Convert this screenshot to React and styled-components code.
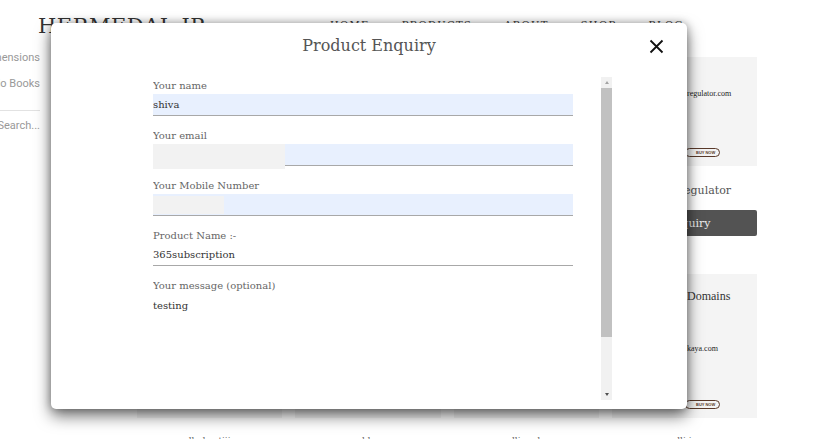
import React from 'react';
import styled, { createGlobalStyle } from 'styled-components';

const GlobalStyle = createGlobalStyle`
  html, body {
    margin: 0;
    padding: 0;
    background: #fff;
    font-family: "DejaVu Serif", "Liberation Serif", serif;
    overflow: hidden;
  }
  * { box-sizing: border-box; }
`;

const Page = styled.div`
  position: relative;
  width: 840px;
  height: 439px;
  overflow: hidden;
`;

const Header = styled.header`
  display: flex;
  align-items: flex-start;
  height: 50px;
  padding: 14px 0 0 38px;
`;

const Logo = styled.div`
  font-size: 21px;
  color: #333;
  letter-spacing: 0.5px;
  width: 292px;
`;

const Nav = styled.nav`
  display: flex;
  gap: 32px;
  padding-top: 5px;
`;

const NavItem = styled.span`
  font-size: 10px;
  letter-spacing: 1.3px;
  color: #333;
`;

const Body = styled.div`
  display: flex;
  padding-top: 7px;
`;

const Sidebar = styled.aside`
  width: 40px;
  margin-top: -6px;
  overflow: hidden;
  display: flex;
  flex-direction: column;
  align-items: flex-end;
  font-family: Roboto, "Noto Sans", sans-serif;
  font-size: 11px;
  color: #999;
`;

const SideItem = styled.div`
  white-space: nowrap;
  height: ${p => p.$h}px;
  padding-top: ${p => p.$pt || 0}px;
  line-height: 14px;
  width: 100%;
  display: flex;
  justify-content: flex-end;
  border-bottom: ${p => (p.$line ? '1px solid #e2e2e2' : 'none')};
`;

const Products = styled.div`
  margin-left: 97px;
  width: 620px;
  display: grid;
  grid-template-columns: repeat(4, 1fr);
  column-gap: 13px;
`;

const Card = styled.div`
  display: flex;
  flex-direction: column;
  align-items: stretch;
  margin-top: ${p => p.$mt || 0}px;
`;

const Thumb = styled.div`
  height: ${p => p.$h}px;
  background: #f4f4f4;
  display: flex;
  flex-direction: column;
  align-items: flex-end;
  padding-top: ${p => p.$pt || 0}px;
  font-family: "Liberation Serif", serif;
  color: #333;
`;

const ThumbTitle = styled.div`
  font-size: 12px;
  width: 70px;
`;

const ThumbUrl = styled.div`
  font-size: 8px;
  color: #222;
  width: 70px;
  margin-top: ${p => p.$mt}px;
`;

const Pill = styled.div`
  width: 72px;
  margin-top: auto;
  margin-bottom: 8px;
  span {
    display: inline-block;
    font-family: "Liberation Sans", sans-serif;
    font-size: 4px;
    font-weight: bold;
    color: #5a3a2a;
    border: 1.5px solid #5a3a2a;
    border-radius: 6px;
    padding: 1px 4px 1px 10px;
  }
`;

const ProductName = styled.div`
  font-size: 11px;
  color: #555;
  text-align: center;
  padding: 18px 0 13px 38px;
`;

const EnquiryButton = styled.button`
  height: 26px;
  border: none;
  border-radius: 2px;
  background: #535353;
  color: #eee;
  font-family: inherit;
  font-size: 11px;
  padding-left: 14px;
`;

const BottomLabel = styled.div`
  font-size: 9px;
  color: #666;
  text-align: center;
  padding-top: 18px;
`;

const Modal = styled.div`
  position: absolute;
  left: 51px;
  top: 23px;
  width: 636px;
  height: 386px;
  background: #fff;
  border-radius: 5px;
  box-shadow: 0 7px 16px rgba(0, 0, 0, 0.55), 0 0 9px rgba(0, 0, 0, 0.3);
  display: flex;
  flex-direction: column;
`;

const ModalHeader = styled.div`
  position: relative;
  height: 54px;
  display: flex;
  justify-content: center;
  padding-top: 13px;
`;

const ModalTitle = styled.h2`
  margin: 0;
  font-size: 16px;
  font-weight: normal;
  color: #555;
`;

const CloseButton = styled.button`
  position: absolute;
  right: 23px;
  top: 16px;
  width: 15px;
  height: 15px;
  padding: 0;
  border: none;
  background: none;
  cursor: pointer;
  svg { display: block; }
`;

const ModalBody = styled.div`
  display: flex;
  padding-left: 102px;
  gap: 28px;
  height: 323px;
`;

const ScrollArea = styled.div`
  width: 420px;
  height: 100%;
  overflow: hidden;
`;

const Scrollbar = styled.div`
  width: 11px;
  height: 100%;
  background: #f1f1f1;
  display: flex;
  flex-direction: column;
`;

const ScrollArrow = styled.div`
  height: 11px;
  margin-top: ${p => (p.$down ? 'auto' : '0')};
  display: flex;
  align-items: center;
  justify-content: center;
  &::before {
    content: '';
    border-left: 2.5px solid transparent;
    border-right: 2.5px solid transparent;
    ${p => (p.$down
      ? 'border-top: 3px solid #505050;'
      : 'border-bottom: 3px solid #a3a3a3;')}
  }
`;

const ScrollThumb = styled.div`
  height: 249px;
  background: #c1c1c1;
`;

const Form = styled.form`
  width: 420px;
  padding-top: 2px;
`;

const Field = styled.div`
  position: relative;
  margin-bottom: 13px;
`;

const Label = styled.label`
  display: block;
  font-size: 10px;
  line-height: 14px;
  color: #666;
  margin-bottom: 1px;
`;

const Input = styled.input`
  display: block;
  width: 100%;
  height: 22px;
  border: none;
  border-bottom: 1px solid #a8a8a8;
  background: ${p => (p.$filled ? '#e8f0fe' : 'transparent')};
  padding: 0;
  font-family: inherit;
  font-size: 10px;
  color: #333;
  outline: none;
`;

const TextArea = styled.textarea`
  display: block;
  width: 100%;
  height: 140px;
  border: none;
  border-bottom: 1px solid #a8a8a8;
  resize: none;
  padding: 6px 0 0;
  font-family: inherit;
  font-size: 10px;
  color: #333;
  outline: none;
`;

const Mask = styled.div`
  position: absolute;
  left: ${p => p.$x}px;
  top: ${p => p.$y}px;
  width: ${p => p.$w}px;
  height: ${p => p.$h}px;
  background: #f2f2f2;
`;

const SubmitButton = styled.button`
  height: 30px;
  padding: 0 20px;
  border: none;
  background: #535353;
  color: #fff;
  font-family: inherit;
`;

const bottomLabels = ['llades tiji', 'a cld a a', 'lli and', 'lli i'];

export default function App() {
  return (
    <>
      <GlobalStyle />
      <Page>
        <Header>
          <Logo>HERMEDAL IP</Logo>
          <Nav>
            <NavItem>HOME</NavItem>
            <NavItem>PRODUCTS</NavItem>
            <NavItem>ABOUT</NavItem>
            <NavItem>SHOP</NavItem>
            <NavItem>BLOG</NavItem>
          </Nav>
        </Header>

        <Body>
          <Sidebar>
            <SideItem $h={26}>Dimensions</SideItem>
            <SideItem $h={34} $line>Audio Books</SideItem>
            <SideItem $h={30} $pt={8}>Search...</SideItem>
          </Sidebar>

          <Products>
            {[0, 1, 2, 3].map(i => (
              <Card key={i}>
                <Thumb $h={109} $pt={32}>
                  {i === 3 && <ThumbUrl $mt={0}>regulator.com</ThumbUrl>}
                  {i === 3 && <Pill><span>BUY NOW</span></Pill>}
                </Thumb>
                <ProductName>{i === 3 ? 'Regulator' : 'Product'}</ProductName>
                <EnquiryButton>Enquiry</EnquiryButton>
              </Card>
            ))}
            {[0, 1, 2, 3].map(i => (
              <Card key={'b' + i} $mt={38}>
                <Thumb $h={144} $pt={15}>
                  {i === 3 && <ThumbTitle>Domains</ThumbTitle>}
                  {i === 3 && <ThumbUrl $mt={40}>kaya.com</ThumbUrl>}
                  {i === 3 && <Pill><span>BUY NOW</span></Pill>}
                </Thumb>
                <BottomLabel>{bottomLabels[i]}</BottomLabel>
              </Card>
            ))}
          </Products>
        </Body>

        <Modal>
          <ModalHeader>
            <ModalTitle>Product Enquiry</ModalTitle>
            <CloseButton aria-label="Close">
              <svg width="15" height="15" viewBox="0 0 15 15">
                <path d="M1.5 1.5 L13.5 13.5 M13.5 1.5 L1.5 13.5" stroke="#111" strokeWidth="1.8" />
              </svg>
            </CloseButton>
          </ModalHeader>
          <ModalBody>
            <ScrollArea>
              <Form>
                <Field>
                  <Label>Your name</Label>
                  <Input $filled defaultValue="shiva" />
                </Field>
                <Field>
                  <Label>Your email</Label>
                  <Input $filled defaultValue="" />
                  <Mask $x={-3} $y={15} $w={135} $h={25} />
                </Field>
                <Field>
                  <Label>Your Mobile Number</Label>
                  <Input $filled defaultValue="" />
                  <Mask $x={-9} $y={17} $w={80} $h={18} />
                </Field>
                <Field>
                  <Label>Product Name :-</Label>
                  <Input defaultValue="365subscription" />
                </Field>
                <Field>
                  <Label>Your message (optional)</Label>
                  <TextArea defaultValue="testing" />
                </Field>
                <SubmitButton type="button">Submit</SubmitButton>
              </Form>
            </ScrollArea>
            <Scrollbar>
              <ScrollArrow />
              <ScrollThumb />
              <ScrollArrow $down />
            </Scrollbar>
          </ModalBody>
        </Modal>
      </Page>
    </>
  );
}
